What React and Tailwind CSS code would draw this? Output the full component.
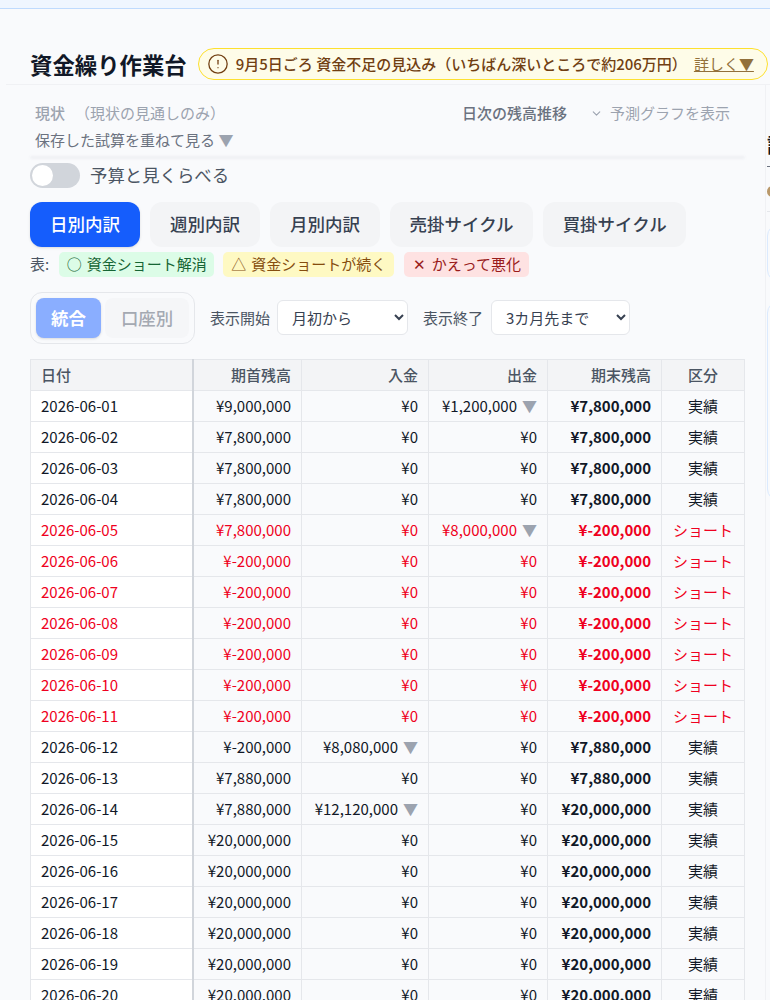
import { ChevronDown, CircleAlert } from 'lucide-react';

const tabs = ['日別内訳', '週別内訳', '月別内訳', '売掛サイクル', '買掛サイクル'];

const chips = [
    ['○', '資金ショート解消', 'w-[155px] bg-[#dcfce7] text-[#166534]'],
    ['△', '資金ショートが続く', 'w-[171px] bg-[#fef9c3] text-[#854d0e]'],
    ['✕', 'かえって悪化', 'w-[125px] bg-[#fee2e2] text-[#991b1b]'],
];

const rows = [
    ['2026-06-01', '¥9,000,000', '¥0', '¥1,200,000', '¥7,800,000', '実績'],
    ['2026-06-02', '¥7,800,000', '¥0', '¥0', '¥7,800,000', '実績'],
    ['2026-06-03', '¥7,800,000', '¥0', '¥0', '¥7,800,000', '実績'],
    ['2026-06-04', '¥7,800,000', '¥0', '¥0', '¥7,800,000', '実績'],
    ['2026-06-05', '¥7,800,000', '¥0', '¥8,000,000', '¥-200,000', 'ショート'],
    ['2026-06-06', '¥-200,000', '¥0', '¥0', '¥-200,000', 'ショート'],
    ['2026-06-07', '¥-200,000', '¥0', '¥0', '¥-200,000', 'ショート'],
    ['2026-06-08', '¥-200,000', '¥0', '¥0', '¥-200,000', 'ショート'],
    ['2026-06-09', '¥-200,000', '¥0', '¥0', '¥-200,000', 'ショート'],
    ['2026-06-10', '¥-200,000', '¥0', '¥0', '¥-200,000', 'ショート'],
    ['2026-06-11', '¥-200,000', '¥0', '¥0', '¥-200,000', 'ショート'],
    ['2026-06-12', '¥-200,000', '¥8,080,000', '¥0', '¥7,880,000', '実績'],
    ['2026-06-13', '¥7,880,000', '¥0', '¥0', '¥7,880,000', '実績'],
    ['2026-06-14', '¥7,880,000', '¥12,120,000', '¥0', '¥20,000,000', '実績'],
    ['2026-06-15', '¥20,000,000', '¥0', '¥0', '¥20,000,000', '実績'],
    ['2026-06-16', '¥20,000,000', '¥0', '¥0', '¥20,000,000', '実績'],
    ['2026-06-17', '¥20,000,000', '¥0', '¥0', '¥20,000,000', '実績'],
    ['2026-06-18', '¥20,000,000', '¥0', '¥0', '¥20,000,000', '実績'],
    ['2026-06-19', '¥20,000,000', '¥0', '¥0', '¥20,000,000', '実績'],
    ['2026-06-20', '¥20,000,000', '¥0', '¥0', '¥20,000,000', '実績'],
];

const Flow = ({ value }) => (
    <td className="border border-[#e5e7eb] px-[10px] pt-[1px] text-right">
        {value}
        {value !== '¥0' && <span className="ml-[5px] text-[#9ca3af]">▼</span>}
    </td>
);

const Row = ({ row }) => {
    const short = row[5] === 'ショート';
    return (
        <tr className={`h-[31px] ${short ? 'text-[#ef0020]' : 'text-[#111827]'}`}>
            <td className="border border-[#e5e7eb] border-r-2 border-r-[#d1d5db] bg-white px-[10px] pt-[1px]">
                {row[0]}
            </td>
            <td className="border border-[#e5e7eb] px-[10px] pt-[1px] text-right">{row[1]}</td>
            <Flow value={row[2]} />
            <Flow value={row[3]} />
            <td className="border border-[#e5e7eb] px-[10px] pt-[1px] text-right font-bold">
                {row[4]}
            </td>
            <td className="border border-[#e5e7eb] px-[10px] pt-[1px] text-center">
                {row[5]}
            </td>
        </tr>
    );
};

export default function App() {
    return (
        <div className="h-[1000px] w-[770px] overflow-hidden bg-[#f9fafc] font-['Noto_Sans_CJK_JP','Noto_Sans',sans-serif]">
            <div className="h-[9px] border-b border-[#bfdbfe] bg-[#eff6ff]" />

            <div className="ml-[6px] flex h-[76px] w-[800px] items-center gap-[11px] border-b border-[#f0f1f4] pl-[24px] pt-[35px]">
                <h1 className="text-[22.4px] font-bold leading-none text-[#111827]">
                    資金繰り作業台
                </h1>
                <div className="flex h-[32px] w-[570px] shrink-0 items-center rounded-full border border-[#fde02f] bg-[#fefce8] pl-[8px] text-[15px] font-medium whitespace-nowrap text-[#713f12]">
                    <CircleAlert size={22} strokeWidth={1.4} className="mr-[7px] shrink-0" />
                    9月5日ごろ 資金不足の見込み（いちばん深いところで約206万円）
                    <span className="ml-[7px] font-normal text-[#92703a] underline">
                        詳しく▼
                    </span>
                </div>
            </div>

            <div className="flex">
                <main className="w-[766px] shrink-0 border-r border-[#f0f1f4] pl-[30px]">
                    <div className="flex w-[715px] justify-between pl-[5px] pr-[15px] pt-[18px] text-[15px] leading-[20px]">
                        <div className="text-[#9ca3af]">
                            <span className="font-medium">現状</span>
                            <span className="ml-[10px]">（現状の見通しのみ）</span>
                        </div>
                        <div className="flex items-center">
                            <span className="font-medium text-[#6b7280]">日次の残高推移</span>
                            <ChevronDown size={13} className="ml-[23px] text-[#9ca3af]" />
                            <span className="ml-[7px] text-[#9ca3af]">予測グラフを表示</span>
                        </div>
                    </div>
                    <div className="mt-[7px] pl-[5px] text-[15px] leading-[20px] text-[#6b7280]">
                        保存した試算を重ねて見る <span className="text-[#9ca3af]">▼</span>
                    </div>
                    <div className="mt-[6px] h-[3px] w-[715px] rounded-full bg-[#eff0f3] blur-[1px]" />

                    <label className="mt-[3px] flex items-center gap-[10px]">
                        <span className="flex h-[25px] w-[50px] items-center rounded-full bg-[#d1d5db] pl-[2px]">
                            <span className="h-[21px] w-[21px] rounded-full bg-white" />
                        </span>
                        <span className="text-[17.4px] text-[#4b5563]">予算と見くらべる</span>
                    </label>

                    <div className="mt-[14px] flex gap-[10px]">
                        {tabs.map((t, i) => (
                            <button
                                key={t}
                                className={`h-[45px] rounded-[12px] text-[17.5px] font-medium ${
                                    t.length > 4 ? 'px-[19.5px]' : 'px-[20px]'
                                } ${
                                    i === 0
                                        ? 'bg-[#155dfc] text-white shadow-sm'
                                        : 'bg-[#f3f4f6] text-[#374151]'
                                }`}
                            >
                                {t}
                            </button>
                        ))}
                    </div>

                    <div className="mt-[5px] flex items-center gap-[9.5px] text-[15px] text-[#4b5563]">
                        <span>表:</span>
                        {chips.map(([mark, label, color]) => (
                            <span
                                key={label}
                                className={`flex h-[25px] items-center gap-[5px] rounded-[5px] pl-[8px] whitespace-nowrap ${color}`}
                            >
                                <span className="w-[15px] text-center">{mark}</span>
                                {label}
                            </span>
                        ))}
                    </div>

                    <div className="mt-[15px] flex items-start">
                        <div className="flex h-[52px] w-[165px] items-center gap-[4px] rounded-[12px] border border-[#e5e7eb] px-[5px]">
                            <span className="flex h-[40px] w-[65px] shrink-0 items-center justify-center rounded-[8px] bg-[#8aaeff] text-[17.4px] font-bold text-white shadow-sm">
                                統合
                            </span>
                            <span className="flex h-[40px] grow items-center justify-center rounded-[8px] bg-[#f5f6f8] text-[17.4px] font-medium whitespace-nowrap text-[#a4a9b2]">
                                口座別
                            </span>
                        </div>
                        <span className="ml-[15px] mt-[15px] text-[15px] text-[#4b5563]">表示開始</span>
                        <select className="ml-[7px] mt-[8px] h-[35px] w-[131px] rounded-[6px] border border-[#e5e7eb] bg-white pl-[10px] text-[15px] text-[#374151]">
                            <option>月初から</option>
                        </select>
                        <span className="ml-[15px] mt-[15px] text-[15px] text-[#4b5563]">表示終了</span>
                        <select className="ml-[8px] mt-[8px] h-[35px] w-[139px] rounded-[6px] border border-[#e5e7eb] bg-white pl-[10px] text-[15px] text-[#374151]">
                            <option>3カ月先まで</option>
                        </select>
                    </div>

                    <table className="mt-[15px] w-[714px] table-fixed border-collapse text-[15px]">
                        <colgroup>
                            <col className="w-[162px]" />
                            <col className="w-[109px]" />
                            <col className="w-[127px]" />
                            <col className="w-[119px]" />
                            <col className="w-[114px]" />
                            <col className="w-[83px]" />
                        </colgroup>
                        <thead>
                            <tr className="h-[31px] bg-[#f3f4f6] text-[#4b5563]">
                                <th className="border border-[#e5e7eb] border-r-2 border-r-[#d1d5db] px-[10px] pt-[1px] text-left font-medium">日付</th>
                                <th className="border border-[#e5e7eb] px-[10px] pt-[1px] text-right font-medium">期首残高</th>
                                <th className="border border-[#e5e7eb] px-[10px] pt-[1px] text-right font-medium">入金</th>
                                <th className="border border-[#e5e7eb] px-[10px] pt-[1px] text-right font-medium">出金</th>
                                <th className="border border-[#e5e7eb] px-[10px] pt-[1px] text-right font-medium">期末残高</th>
                                <th className="border border-[#e5e7eb] px-[10px] pt-[1px] text-center font-medium">区分</th>
                            </tr>
                        </thead>
                        <tbody>
                            {rows.map((r) => (
                                <Row key={r[0]} row={r} />
                            ))}
                        </tbody>
                    </table>
                </main>

                {/* side panel, only its left edge is inside the window */}
                <aside className="w-[200px] shrink-0 pl-[1px]">
                    <div className="mt-[48px] text-[20px] font-bold leading-[24px] text-[#111827]">詳細</div>
                    <div className="mt-[9px] h-[1px] w-[10px] bg-[#6b7280]" />
                    <div className="mt-[19px] h-[11px] w-[10px] rounded-l-[6px] bg-[#b9986a]" />
                    <div className="mt-[14px] h-[1px] w-[100px] bg-[#e5e7eb]" />
                    <div className="mt-[12px] h-[58px] rounded-[12px] border border-[#dbeafe]" />
                    <div className="mt-[19px] h-[200px] rounded-[12px] border border-[#dbeafe]" />
                </aside>
            </div>
        </div>
    );
}
